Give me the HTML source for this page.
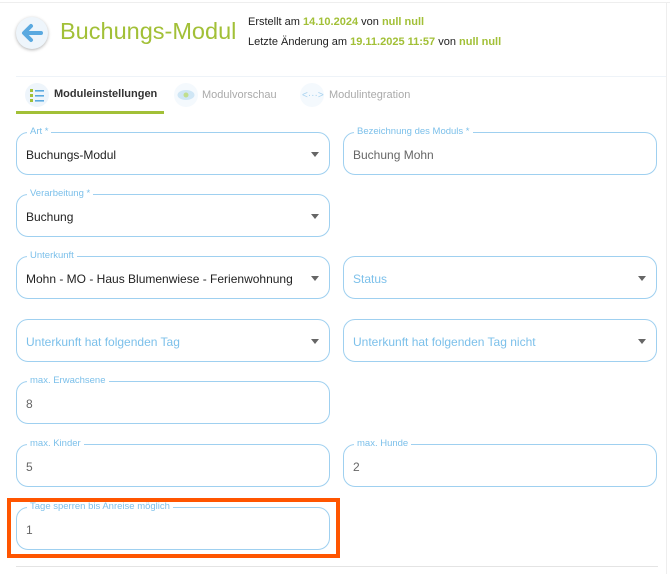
<!DOCTYPE html><html><head><style>
body{margin:0;width:670px;height:574px;background:#fff;font-family:"Liberation Sans",sans-serif;position:relative;overflow:hidden}
.a{position:absolute}
.f{position:absolute;border:1px solid #9fd0f0;border-radius:12px;height:43px;box-sizing:border-box}
.f .l{position:absolute;top:-7px;left:10px;background:#fff;padding:0 3px;font-size:9.5px;color:#7cc0ea;line-height:12px}
.f .v{position:absolute;left:9px;top:15px;font-size:12px;color:#222}
.f .g{color:#666}
.f .p{color:#7cc0ea}
.f .d{position:absolute;right:10px;top:19px;width:0;height:0;border-left:4.5px solid transparent;border-right:4.5px solid transparent;border-top:5px solid #666}
.L{left:16px;width:314px}.R{left:343px;width:314px}
</style></head><body>
<div class="a" style="left:0;top:2px;width:670px;height:1px;background:#eee"></div>
<div class="a" style="left:666px;top:2px;width:1px;height:572px;background:#eee"></div>
<div class="a" style="left:16px;top:17px;width:32px;height:32px;border-radius:50%;background:#eef5fb;box-shadow:0 1px 3px rgba(0,0,0,.3)">
<svg width="32" height="32" viewBox="0 0 32 32"><path d="M25 16H9M15 9l-7 7 7 7" stroke="#5aa9e0" stroke-width="4" fill="none" stroke-linecap="round" stroke-linejoin="round"/></svg></div>
<div class="a" style="left:60px;top:18px;font-size:23.5px;color:#a2c037;font-family:'Liberation Sans',sans-serif">Buchungs-Modul</div>
<div class="a" style="left:248px;top:12px;font-size:11px;color:#222;line-height:20px">Erstellt am <b style="color:#a2c037">14.10.2024</b> von <b style="color:#a2c037">null null</b><br>Letzte Änderung am <b style="color:#a2c037">19.11.2025 11:57</b> von <b style="color:#a2c037">null null</b></div>
<div class="a" style="left:16px;top:76px;width:650px;height:1px;background:#eef3f8"></div>
<div class="a" style="left:25px;top:83px;width:24px;height:24px;border-radius:50%;background:#eef5fb"></div>
<svg class="a" style="left:29px;top:87px" width="16" height="16"><g fill="#a2c037"><rect x="1" y="2" width="3" height="3"/><rect x="1" y="7" width="3" height="3"/><rect x="1" y="12" width="3" height="3"/></g><g fill="#5aa9e0"><rect x="6" y="3" width="9" height="1.6"/><rect x="6" y="8" width="9" height="1.6"/><rect x="6" y="13" width="9" height="1.6"/></g></svg>
<div class="a" style="left:54px;top:88px;font-size:11px;color:#333;font-weight:bold">Moduleinstellungen</div>
<div class="a" style="left:16px;top:111px;width:148px;height:3px;background:#a2c037"></div>
<div class="a" style="left:174px;top:83px;width:24px;height:24px;border-radius:50%;background:#f4f9fd"></div>
<svg class="a" style="left:177px;top:89px" width="18" height="12"><ellipse cx="9" cy="6" rx="8.5" ry="5" fill="#cfe6f5"/><circle cx="9" cy="6" r="2.5" fill="#b5d84a" opacity=".6"/></svg>
<div class="a" style="left:202px;top:89px;font-size:11px;color:#aaa">Modulvorschau</div>
<div class="a" style="left:300px;top:83px;width:24px;height:24px;border-radius:50%;background:#f4f9fd"></div>
<div class="a" style="left:302px;top:90px;font-size:10px;color:#a9d3f0">&lt;···&gt;</div>
<div class="a" style="left:329px;top:89px;font-size:11px;color:#aaa">Modulintegration</div>

<div class="f L" style="top:132px"><span class="l">Art *</span><span class="v">Buchungs-Modul</span><i class="d"></i></div>
<div class="f R" style="top:132px"><span class="l">Bezeichnung des Moduls *</span><span class="v g">Buchung Mohn</span></div>
<div class="f L" style="top:194px"><span class="l">Verarbeitung *</span><span class="v">Buchung</span><i class="d"></i></div>
<div class="f L" style="top:256px"><span class="l">Unterkunft</span><span class="v">Mohn - MO - Haus Blumenwiese - Ferienwohnung</span><i class="d"></i></div>
<div class="f R" style="top:256px"><span class="v p">Status</span><i class="d"></i></div>
<div class="f L" style="top:319px"><span class="v p">Unterkunft hat folgenden Tag</span><i class="d"></i></div>
<div class="f R" style="top:319px"><span class="v p">Unterkunft hat folgenden Tag nicht</span><i class="d"></i></div>
<div class="f L" style="top:381px"><span class="l">max. Erwachsene</span><span class="v g">8</span></div>
<div class="f L" style="top:444px"><span class="l">max. Kinder</span><span class="v g">5</span></div>
<div class="f R" style="top:444px"><span class="l">max. Hunde</span><span class="v g">2</span></div>
<div class="f L" style="top:507px"><span class="l">Tage sperren bis Anreise möglich</span><span class="v g">1</span></div>
<div class="a" style="left:7px;top:498px;width:325px;height:52px;border:4px solid #ff5500"></div>
<div class="a" style="left:16px;top:566px;width:642px;height:1px;background:#e4e4e4"></div>
</body></html>
